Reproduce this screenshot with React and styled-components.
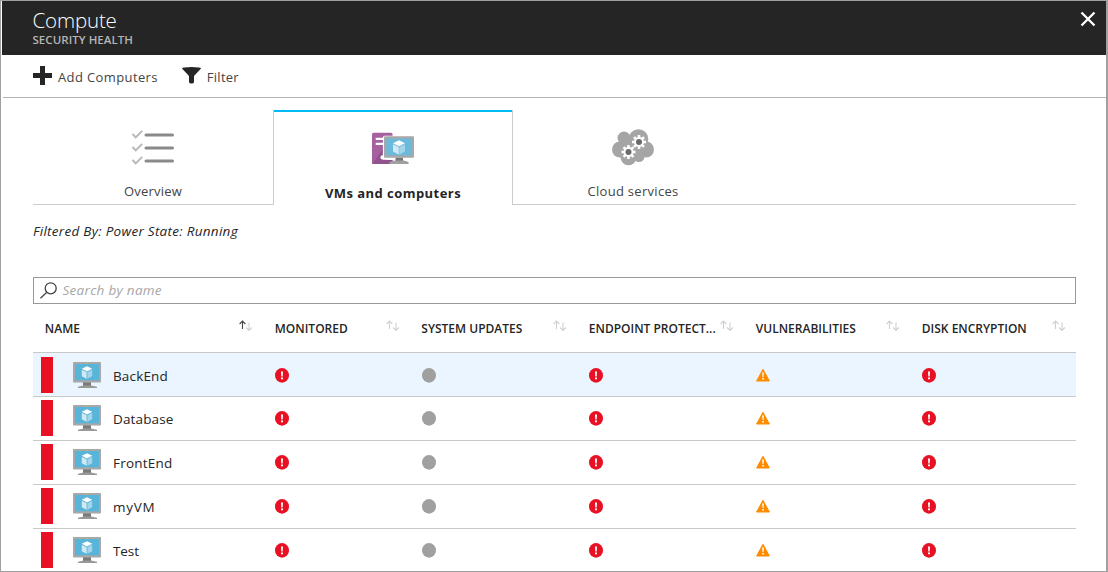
import React from 'react';
import styled, { createGlobalStyle } from 'styled-components';

const GlobalStyle = createGlobalStyle`
  * { box-sizing: border-box; }
  html, body { margin: 0; height: 100%; overflow: hidden; background: #fff; }
  body { font-family: 'Open Sans', 'Noto Sans', sans-serif; font-size: 13px; color: #252525; }
  svg { display: block; flex: none; }
`;

const Blade = styled.div`
  width: 1108px;
  height: 572px;
  overflow: hidden;
  border: 1px solid #a0a0a0;
  border-width: 1px 2px 1px 1px;
  background: #fff;
  display: flex;
  flex-direction: column;
`;

const Header = styled.header`
  flex: none;
  height: 54px;
  margin-left: 1px;
  background: #252525;
  display: flex;
  justify-content: space-between;
  padding: 7px 10px 0 30.5px;
`;

const Title = styled.h1`
  margin: 0;
  color: #fff;
  font-size: 20.5px;
  line-height: 25px;
  font-weight: 300;
  letter-spacing: -0.15px;
`;

const Subtitle = styled.div`
  color: #b5b5b5;
  font-size: 11.5px;
  line-height: 14px;
  font-weight: 600;
  letter-spacing: 0.05px;
`;

const CloseButton = styled.button`
  border: 0;
  padding: 3px 0 0;
  background: none;
  align-self: flex-start;
`;

const Toolbar = styled.div`
  flex: none;
  height: 43px;
  margin-left: 2px;
  padding: 0 0 0 30px;
  border-bottom: 1px solid #b4b4b4;
  display: flex;
  align-items: flex-start;
`;

const Command = styled.button`
  border: 0;
  background: none;
  padding: 10px 0 0;
  margin-right: ${(p) => p.$gap || 0}px;
  display: flex;
  align-items: flex-start;
  gap: 6px;
  font: inherit;
  line-height: 24px;
  color: #444;
  letter-spacing: ${(p) => p.$spacing || 0}px;

  svg { margin-top: 1px; }
`;

const Content = styled.main`
  padding: 12px 30px 0 32px;
`;

const Tabs = styled.nav`
  display: grid;
  grid-template-columns: 240px 240px 240px 1fr;
  height: 95px;
`;

const Tab = styled.div`
  display: flex;
  flex-direction: column;
  align-items: center;
  justify-content: space-between;
  padding: ${(p) => (p.$active ? '20px 0 1px' : '17px 0 2px')};
  border: solid #ccc;
  border-width: ${(p) => (p.$active ? '0 1px' : '0 0 1px')};
  box-shadow: ${(p) => (p.$active ? 'inset 0 2px 0 #00bcf2' : 'none')};
  line-height: 22px;
  font-weight: ${(p) => (p.$active ? 700 : 400)};
  color: ${(p) => (p.$active ? '#252525' : '#444')};
  letter-spacing: ${(p) => p.$spacing || 0}px;
`;

const FilterNote = styled.div`
  margin-top: 15px;
  line-height: 22px;
  font-style: italic;
  font-size: 13.5px;
  letter-spacing: 0.28px;
`;

const SearchBox = styled.div`
  margin-top: 35px;
  height: 27px;
  border: 1px solid #999;
  display: flex;
  align-items: center;
  gap: 5.5px;
  padding: 0 0 1px 6px;
  font-style: italic;
  font-size: 13.5px;
  letter-spacing: 0.29px;
  color: #a6a6a6;
`;

const Row = styled.div`
  display: grid;
  grid-template-columns: 230px 146.5px 167.5px 167px 166px 166px;
  height: 44px;
  border-top: 1px solid #c8c8c8;
  padding-top: ${(p) => (p.$selected ? 1 : 0)}px;
  background: ${(p) => (p.$selected ? '#eaf5ff' : '#fff')};
`;

const HeadRow = styled(Row)`
  height: 48px;
  border-top: 0;
`;

const HeadCell = styled.div`
  display: flex;
  justify-content: space-between;
  align-items: flex-start;
  padding: 16px 10px 0 11.8px;
  font-size: 12px;
  line-height: 17px;
  font-weight: 600;
  white-space: nowrap;
`;

const NameCell = styled.div`
  display: flex;
  align-items: flex-start;
  padding: 3px 0 0 8px;
`;

const Severity = styled.div`
  width: 12px;
  height: 36px;
  background: #e81123;
  margin-right: 20px;
`;

const MonitorSlot = styled.div`
  padding-top: 5px;
`;

const MachineName = styled.div`
  margin: 8px 0 0 12px;
  line-height: 22px;
  font-size: 13.5px;
  font-weight: 500;
  letter-spacing: ${(p) => p.$spacing || 0}px;
`;

const StatusCell = styled.div`
  padding: 14px 0 0 12px;
`;

const Monitor = () => (
  <svg width="28" height="27" viewBox="0 0 28 27">
    <path d="M10 20h8v4.500h-8z" fill="#7a7a7a" />
    <path d="M10.500 23.500h7.500l6 1.200V26H5v-1.300z" fill="#999" />
    <rect width="28" height="20.600" rx=".8" fill="#a8a8a8" />
    <rect x="2" y="2" width="24" height="16.300" fill="#59b4d9" />
    <path d="M14 4.200l5.200 2.600-5.200 2.700-5.200-2.700z" fill="#fff" />
    <path d="M8.800 7.800l4.800 2.400v6.600l-4.800-2.500z" fill="#cfe9f5" />
    <path d="M19.200 7.800l-4.800 2.400v6.600l4.800-2.500z" fill="#a3d4ea" />
    <rect x="13.400" y=".7" width="1.200" height="1" fill="#b8d432" />
  </svg>
);

const SortIcon = ({ active }) => (
  <svg width="14" height="12" viewBox="0 0 14 12" fill="none" strokeWidth="1.1">
    <path d="M3.500 9V1.200M.6 4l2.900-2.900L6.400 4" stroke={active ? '#444' : '#d0d0d0'} />
    <path d="M10 2.500v7.800M7.100 7.500l2.900 2.900 2.900-2.900" stroke="#d0d0d0" />
  </svg>
);

const ErrorIcon = () => (
  <svg width="14" height="15" viewBox="0 0 14 15">
    <ellipse cx="7" cy="7.400" rx="7" ry="7.300" fill="#e81123" />
    <path d="M6 3.400h2l-.3 5.200H6.300zM6 9.500h2v1.700H6z" fill="#fff" />
  </svg>
);

const NoneIcon = () => (
  <svg width="14" height="15" viewBox="0 0 14 15">
    <ellipse cx="7" cy="7.400" rx="7" ry="7.300" fill="#a0a0a0" />
  </svg>
);

const WarningIcon = () => (
  <svg width="14" height="15" viewBox="0 0 14 15">
    <path d="M7 1.300l6.400 11.700H.6z" fill="#ff8c00" stroke="#ff8c00" strokeWidth="1" strokeLinejoin="round" />
    <path d="M6.200 4.600h1.700l-.3 4.400H6.500zM6.200 10h1.700v1.500H6.200z" fill="#fff" />
  </svg>
);

const ChecklistIcon = () => (
  <svg width="44" height="40" viewBox="0 0 44 40" fill="none">
    {[0.5, 13.5, 26.5].map((y) => (
      <g key={y}>
        <path d={`M1.500 ${y + 6.5}l3.200 3.400 6.500-6.500`} stroke="#b8b8b8" strokeWidth="2" />
        <path d={`M15 ${y + 7.5}h26.500`} stroke="#8a8a8a" strokeWidth="3" strokeLinecap="round" />
      </g>
    ))}
  </svg>
);

const ComputersIcon = () => (
  <svg width="42" height="35" viewBox="0 0 42 35">
    <path d="M1.500 2.700H19q1.500 0 1.500 1.500V34H1.500Q0 34 0 32.500V4.200Q0 2.700 1.500 2.700z" fill="#a4609f" />
    <path d="M0 34L11 19h9.500v15z" fill="#92538d" />
    <path d="M3.700 7.800H12V10H3.700zM3.700 12.700H12V15H3.700z" fill="#fff" />
    <path d="M12.500 5.700H22V29.500H10.900V8q0-2.300 1.600-2.300z" fill="#fff" />
    <circle cx="10.500" cy="27.400" r="2.100" fill="#fff" />
    <path d="M10.300 27.500H23V30H16.500L10.300 29.300z" fill="#fff" />
    <path d="M23.500 27.500h7.500v4h-7.500z" fill="#777" />
    <path d="M22.500 30.500h9.500l4.500 1.500v2h-19v-2z" fill="#a0a0a0" />
    <rect x="12" y="6.200" width="30" height="21.600" rx="1" fill="#a8a8a8" />
    <rect x="14.300" y="8.600" width="25.400" height="16.800" fill="#6bbadb" />
    <path d="M27 10.300l6 2.900-6 3.100-6-3.100z" fill="#fff" />
    <path d="M21 14.200l5.700 2.900v7.300L21 21.400z" fill="#cfe9f5" />
    <path d="M33 14.200l-5.700 2.900v7.300l5.700-3z" fill="#a3d4ea" />
  </svg>
);

const Gear = ({ x, y }) => (
  <g transform={`translate(${x} ${y})`}>
    <circle r="5" fill="#fff" />
    {[0, 45, 90, 135].map((a) => (
      <rect key={a} x="-1.300" y="-7" width="2.600" height="14" fill="#fff" transform={`rotate(${a})`} />
    ))}
    <circle r="3" fill="#6a6a6a" />
  </g>
);

const CloudIcon = () => (
  <svg width="42" height="40" viewBox="0 0 42 40">
    <g fill="#a5a5a5">
      <circle cx="8" cy="22.500" r="8" />
      <circle cx="12" cy="11" r="6.500" />
      <circle cx="26.500" cy="12" r="9.800" />
      <circle cx="34" cy="22.500" r="8" />
      <circle cx="16.500" cy="30.300" r="8" />
      <circle cx="27" cy="29.500" r="5.500" />
      <path d="M8 12h26v18H8z" />
    </g>
    <Gear x={27} y={15} />
    <Gear x={16.5} y={25} />
  </svg>
);

const statusIcons = { error: ErrorIcon, none: NoneIcon, warning: WarningIcon };
const statuses = ['error', 'none', 'error', 'warning', 'error'];

const columns = [
  'NAME',
  'MONITORED',
  'SYSTEM UPDATES',
  'ENDPOINT PROTECT...',
  'VULNERABILITIES',
  'DISK ENCRYPTION',
];

const machines = [
  ['BackEnd', 0.15],
  ['Database', 0.15],
  ['FrontEnd', 0.2],
  ['myVM', 0.7],
  ['Test', -0.1],
];

export default function App() {
  return (
    <>
      <GlobalStyle />
      <Blade>
        <Header>
          <div>
            <Title>Compute</Title>
            <Subtitle>SECURITY HEALTH</Subtitle>
          </div>
          <CloseButton aria-label="Close">
            <svg width="16" height="16" viewBox="0 0 16 16">
              <path d="M1.500 1.500l13 13M14.500 1.500L1.500 14.500" stroke="#fff" strokeWidth="2.300" />
            </svg>
          </CloseButton>
        </Header>
        <Toolbar>
          <Command $gap={24} $spacing={0.38}>
            <svg width="19" height="19" viewBox="0 0 19 19">
              <path d="M7 0h5v7h7v5h-7v7H7v-7H0V7h7z" fill="#252525" />
            </svg>
            <span>Add Computers</span>
          </Command>
          <Command $spacing={0.25}>
            <svg width="19" height="19" viewBox="0 0 19 19">
              <path d="M0 2.500Q0 1 9.500 1T19 2.500L12 10V16q0 1.500-2.500 1.500T7 16v-6z" fill="#252525" />
            </svg>
            <span>Filter</span>
          </Command>
        </Toolbar>
        <Content>
          <Tabs>
            <Tab $spacing={0.2}><ChecklistIcon />Overview</Tab>
            <Tab $active $spacing={0.45}><ComputersIcon />VMs and computers</Tab>
            <Tab $spacing={0.3}><CloudIcon />Cloud services</Tab>
            <Tab />
          </Tabs>
          <FilterNote>Filtered By: Power State: Running</FilterNote>
          <SearchBox>
            <svg width="17" height="17" viewBox="0 0 17 17" fill="none" stroke="#444" strokeWidth="1.300">
              <circle cx="10.700" cy="6.300" r="5.500" />
              <path d="M6.800 10.200L.5 16.300" />
            </svg>
            Search by name
          </SearchBox>
          <HeadRow>
            {columns.map((label, i) => (
              <HeadCell key={label}>
                {label}
                <SortIcon active={i === 0} />
              </HeadCell>
            ))}
          </HeadRow>
          {machines.map(([name, spacing], i) => (
            <Row key={name} $selected={i === 0}>
              <NameCell>
                <Severity />
                <MonitorSlot><Monitor /></MonitorSlot>
                <MachineName $spacing={spacing}>{name}</MachineName>
              </NameCell>
              {statuses.map((status, j) => {
                const Icon = statusIcons[status];
                return <StatusCell key={j}><Icon /></StatusCell>;
              })}
            </Row>
          ))}
        </Content>
      </Blade>
    </>
  );
}
